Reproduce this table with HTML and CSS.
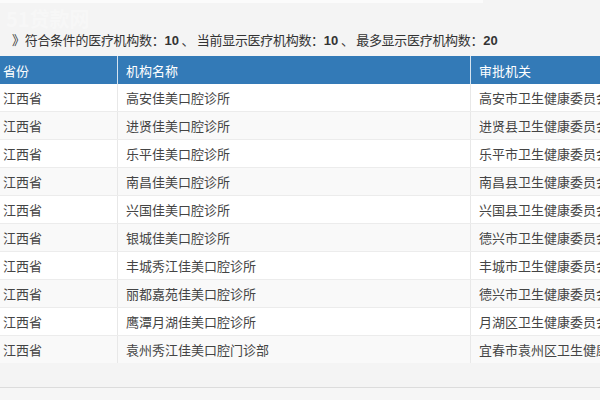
FILE: index.html
```html
<!DOCTYPE html>
<html lang="zh-CN">
<head>
<meta charset="utf-8">
<link rel="stylesheet" href="styles.css">
</head>
<body>
<div class="page">
  <div class="topbar"></div>
  <div class="watermark">51贷款网</div>
  <p class="info">》符合条件的医疗机构数：<b>10</b> 、 当前显示医疗机构数：<b>10</b> 、 最多显示医疗机构数：<b>20</b></p>
  <table class="grid">
    <thead>
      <tr><th class="c1">省份</th><th class="c2">机构名称</th><th class="c3">审批机关</th></tr>
    </thead>
    <tbody>
      <tr><td>江西省</td><td>高安佳美口腔诊所</td><td>高安市卫生健康委员会</td></tr>
      <tr><td>江西省</td><td>进贤佳美口腔诊所</td><td>进贤县卫生健康委员会</td></tr>
      <tr><td>江西省</td><td>乐平佳美口腔诊所</td><td>乐平市卫生健康委员会</td></tr>
      <tr><td>江西省</td><td>南昌佳美口腔诊所</td><td>南昌县卫生健康委员会</td></tr>
      <tr><td>江西省</td><td>兴国佳美口腔诊所</td><td>兴国县卫生健康委员会</td></tr>
      <tr><td>江西省</td><td>银城佳美口腔诊所</td><td>德兴市卫生健康委员会</td></tr>
      <tr><td>江西省</td><td>丰城秀江佳美口腔诊所</td><td>丰城市卫生健康委员会</td></tr>
      <tr><td>江西省</td><td>丽都嘉苑佳美口腔诊所</td><td>德兴市卫生健康委员会</td></tr>
      <tr><td>江西省</td><td>鹰潭月湖佳美口腔诊所</td><td>月湖区卫生健康委员会</td></tr>
      <tr><td>江西省</td><td>袁州秀江佳美口腔门诊部</td><td>宜春市袁州区卫生健康委员会</td></tr>
    </tbody>
  </table>
  <div class="footer"></div>
</div>
</body>
</html>
```
FILE: styles.css
```css
html, body {
  margin: 0;
  padding: 0;
  background: #f4f4f4;
  overflow: hidden;
  width: 600px;
  height: 400px;
}
.page {
  position: relative;
  font-family: "Noto Sans CJK SC", "Noto Sans", sans-serif;
  color: #333;
}
.topbar {
  width: 483px;
  height: 3px;
  background: #fbfbfb;
}
.watermark {
  position: absolute;
  left: 6px;
  top: 4px;
  font-size: 20px;
  font-weight: bold;
  color: rgba(255,255,255,0.3);
}
.info {
  margin: 0;
  padding: 26px 0 0 12px;
  height: 27px;
  font-size: 13px;
  line-height: 22px;
  letter-spacing: -0.3px;
  color: #333;
}
.info b {
  font-family: "Liberation Sans", Arial, sans-serif;
  font-weight: 700;
  font-size: 13px;
  letter-spacing: 0;
}
.grid {
  margin-left: -5px;
  width: 720px;
  border-collapse: collapse;
  table-layout: fixed;
  font-size: 13px;
}
.grid .c1 { width: 106px; }
.grid .c2 { width: 336px; }
.grid th {
  background: #337ab7;
  color: #fff;
  font-weight: normal;
  text-align: left;
  height: 28px;
  padding: 0 8px;
  border-left: 1px solid #d6e4f0;
}
.grid th:first-child, .grid td:first-child { border-left: none; }
.grid td {
  height: 27px;
  padding: 0 8px;
  background: #fff;
  border-left: 1px solid #e8e8e8;
  border-bottom: 1px solid #ececec;
  color: #444;
  white-space: nowrap;
  overflow: hidden;
}
.grid tbody tr:nth-child(even) td { background: #f9f9f9; }
.grid tbody tr:last-child td { border-bottom: none; }
.footer {
  margin-top: 24px;
  height: 13px;
  border-top: 1px solid #dcdcdc;
  background: #f6f6f6;
}
```
